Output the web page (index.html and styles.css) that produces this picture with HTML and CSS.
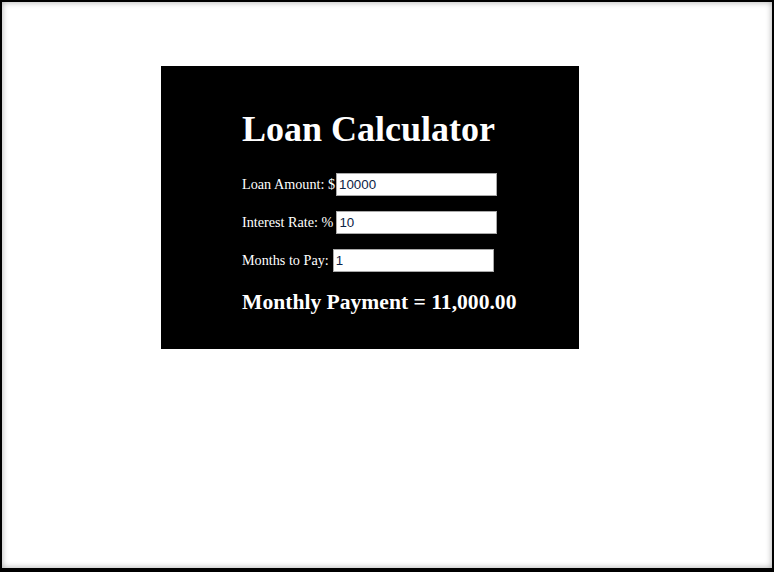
FILE: index.html
```html
<!DOCTYPE html>
<html>
<head>
<meta charset="utf-8">
<title>Loan Calculator</title>
<link rel="stylesheet" href="styles.css">
</head>
<body>
<div class="frame">
  <div class="calc">
    <h1 class="title">Loan Calculator</h1>
    <div class="row"><span class="lbl">Loan Amount: $</span><input class="field" type="text" value="10000"></div>
    <div class="row"><span class="lbl gap-sm">Interest Rate: %</span><input class="field" type="text" value="10"></div>
    <div class="row"><span class="lbl gap">Months to Pay:</span><input class="field" type="text" value="1"></div>
    <h2 class="result">Monthly Payment = 11,000.00</h2>
  </div>
</div>
</body>
</html>
```
FILE: styles.css
```css
html, body {
  margin: 0;
  padding: 0;
  background: #fff;
}
.frame {
  width: 774px;
  height: 572px;
  box-sizing: border-box;
  border-style: solid;
  border-color: #000;
  border-width: 2px 2px 4px 2px;
  box-shadow: inset 0 0 6px rgba(0, 0, 0, 0.35);
  padding: 64px 0 0 159px;
  font-family: "Liberation Serif", "Times New Roman", serif;
  color: #fff;
}
.calc {
  width: 418px;
  height: 283px;
  box-sizing: border-box;
  background: #000;
  padding: 43px 0 0 81px;
}
.title {
  margin: 0;
  font-size: 36px;
  line-height: 40px;
  font-weight: bold;
}
.title + .row {
  margin-top: 24px;
}
.row {
  display: flex;
  align-items: baseline;
  height: 38px;
  font-size: 14.2px;
}
.lbl {
  margin-right: 1px;
}
.lbl.gap-sm {
  margin-right: 3px;
}
.lbl.gap {
  margin-right: 4px;
}
.field {
  width: 161px;
  height: 23px;
  box-sizing: border-box;
  margin: 0;
  border: 1px solid #a9a9a9;
  padding: 3px 2px;
  font-family: "Liberation Sans", Arial, sans-serif;
  font-size: 13.33px;
  line-height: 15px;
  color: #0c2346;
  background: #fff;
}
.result {
  margin: 3px 0 0 0;
  font-size: 21.6px;
  line-height: 25px;
  font-weight: bold;
}
```
